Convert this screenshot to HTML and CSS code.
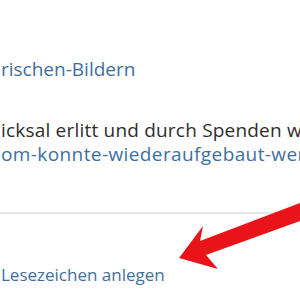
FILE: index.html
```html
<!DOCTYPE html>
<html lang="de">
<head>
<meta charset="utf-8">
<link rel="stylesheet" href="styles.css">
</head>
<body>
<div class="page">
  <section class="entry">
    <a class="link first">rischen-Bildern</a>
    <p class="text">icksal erlitt und durch Spenden wieder aufgebaut werden konnte</p>
    <a class="link second">om-konnte-wiederaufgebaut-werden</a>
  </section>
  <hr class="sep">
  <div class="actions">
    <a class="link action">Lesezeichen anlegen</a>
  </div>
  <svg class="arrow" width="300" height="300" viewBox="0 0 300 300">
    <polygon fill="#e8141a" points="179,258 203,226 200,241 300,203 300,221 206,255 218,269"/>
  </svg>
</div>
</body>
</html>
```

FILE: styles.css
```css
html, body {
  margin: 0;
  padding: 0;
  background: #ffffff;
}
.page {
  position: relative;
  width: 300px;
  height: 300px;
  overflow: hidden;
  font-family: "Open Sans", "Noto Sans", sans-serif;
  font-size: 19px;
}
.entry {
  display: flex;
  flex-direction: column;
  padding-top: 57px;
  padding-left: 1px;
  white-space: nowrap;
}
.link {
  color: #3f6f9e;
  text-decoration: none;
  line-height: 24px;
  display: block;
}
.second {
  letter-spacing: 0.4px;
}
.text {
  margin: 37px 0 0 0;
  color: #2e2e2e;
  line-height: 24px;
  letter-spacing: 0.2px;
}
.sep {
  margin: 46px 0 0 0;
  border: 0;
  border-top: 2px solid #e6e6e6;
  height: 0;
}
.actions {
  padding-top: 49px;
  padding-left: 1px;
}
.action {
  font-size: 17px;
}
.arrow {
  position: absolute;
  left: 0;
  top: 0;
}
```
